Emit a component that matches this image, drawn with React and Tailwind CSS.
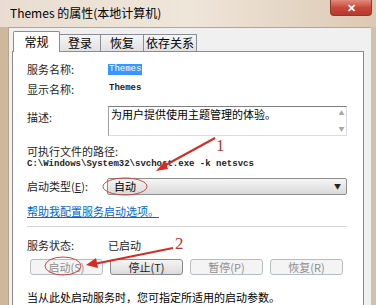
import React from 'react';

const cjk = { fontFamily: '"Noto Sans CJK SC", "Noto Sans", sans-serif' };
const mono = { fontFamily: '"Liberation Mono", "Noto Sans CJK SC", monospace' };

function Tab({ label, active, width }) {
    if (active) {
        return (
            <div className={'relative z-10 -mb-px flex h-[21px] items-center justify-center rounded-t-[2px] border border-b-0 border-[#898c95] bg-white text-[12px] text-black ' + width}>
                {label}
            </div>
        );
    }
    return (
        <div className={'-ml-px flex h-[17px] items-center justify-center border border-b-0 border-[#898c95] bg-gradient-to-b from-[#f6f6f6] to-[#e1e1e1] text-[12px] text-black ' + width}>
            {label}
        </div>
    );
}

function WinButton({ label, disabled }) {
    return (
        <div
            className={
                'flex h-[16px] w-[73px] items-center justify-center rounded-[3px] border text-[11px] ' +
                (disabled
                    ? 'border-[#b8bcbf] bg-[#f4f4f4] text-[#8d8d8d]'
                    : 'border-[#8a8a8a] bg-gradient-to-b from-[#f4f4f4] to-[#dcdcdc] text-[#222]')
            }
        >
            {label}
        </div>
    );
}

export default function App() {
    return (
        <div className="relative h-[305px] w-[376px] overflow-hidden bg-gradient-to-r from-[#cdb79c] via-[#e6d8c6] to-[#d6c1a8]" style={cjk}>
            {/* title bar */}
            <div className="flex h-[27px] items-start bg-gradient-to-r from-[#e8ddd0] via-[#efe6da] to-[#dcc9b3]">
                <div className="pl-[10px] pt-[5px] text-[12px] leading-[16px] text-black">Themes 的属性(本地计算机)</div>
                <div className="ml-auto mr-[4px] flex h-[16px] w-[42px] items-center justify-center rounded-b-[4px] border border-t-0 border-[#8a3a30] bg-gradient-to-b from-[#e08a7c] via-[#c8483a] to-[#b83a2c] text-[11px] font-bold leading-none text-white">
                    ✕
                </div>
            </div>

            {/* window body */}
            <div className="ml-[8px] mr-[5px] flex h-[278px] flex-col border-l border-t border-[#b5a48e] bg-[#f0f0f0]">
                <div className="flex items-end pl-[4px] pt-[3px]">
                    <Tab label="常规" active width="w-[47px]" />
                    <Tab label="登录" width="w-[42px]" />
                    <Tab label="恢复" width="w-[44px]" />
                    <Tab label="依存关系" width="w-[54px]" />
                </div>

                <div className="ml-[3px] mr-[7px] flex flex-1 flex-col border border-b-0 border-[#898c95] bg-white pl-[14px] pr-[16px] text-[11px] text-[#1e1e1e]">
                    <div className="mt-[10px] flex h-[14px] items-center">
                        <div className="w-[81px]">服务名称:</div>
                        <span className="bg-[#3399ff] px-px text-[9px] leading-[11px] text-white" style={mono}>Themes</span>
                    </div>
                    <div className="mt-[6px] flex h-[14px] items-center">
                        <div className="w-[81px]">显示名称:</div>
                        <span className="px-px text-[9px] font-bold" style={mono}>Themes</span>
                    </div>
                    <div className="mt-[10px] flex">
                        <div className="w-[81px] pt-[3px]">描述:</div>
                        <div className="flex h-[30px] flex-1 border border-t-[#7f7f7f] border-l-[#a0a0a0] border-r-[#dcdcdc] border-b-[#dcdcdc]">
                            <div className="flex-1 pl-[2px] leading-[14px] text-black">为用户提供使用主题管理的体验。</div>
                            <div className="flex w-[9px] flex-col items-center justify-between py-[3px] text-[6px] leading-none text-[#a8a8a8]">
                                <span>▲</span>
                                <span>▼</span>
                            </div>
                        </div>
                    </div>
                    <div className="mt-[8px] h-[14px] leading-[14px]">可执行文件的路径:</div>
                    <div className="h-[12px] text-[9px] font-bold leading-[12px] text-[#222]" style={mono}>
                        C:\Windows\System32\svchost.exe -k netsvcs
                    </div>
                    <div className="mt-[8px] flex h-[17px] items-center">
                        <div className="w-[80px]">启动类型(<span className="underline">E</span>):</div>
                        <div className="flex h-[17px] flex-1 items-center rounded-[2px] border border-[#8f8f8f] bg-gradient-to-b from-[#f5f5f5] to-[#dadada] pl-[6px] pr-[5px]">
                            <span className="text-black">自动</span>
                            <span className="ml-auto text-[7px] text-[#222]">▼</span>
                        </div>
                    </div>
                    <div className="mt-[9px] h-[14px] leading-[14px] text-[#0066cc] underline">帮助我配置服务启动选项。</div>
                    <div className="mt-[8px] h-px bg-[#d5d5d5]" />
                    <div className="mt-[11px] flex h-[14px] items-center">
                        <div className="w-[81px]">服务状态:</div>
                        <div>已启动</div>
                    </div>
                    <div className="mt-[7px] flex gap-[7px] pl-[3px]">
                        <WinButton label="启动(S)" disabled />
                        <WinButton label="停止(T)" />
                        <WinButton label="暂停(P)" disabled />
                        <WinButton label="恢复(R)" disabled />
                    </div>
                    <div className="mt-[15px] h-[14px] leading-[14px] text-black">当从此处启动服务时，您可指定所适用的启动参数。</div>
                </div>
            </div>

            {/* red annotations */}
            <svg className="pointer-events-none absolute inset-0" width="376" height="305" viewBox="0 0 376 305">
                <ellipse cx="125" cy="186.5" rx="22" ry="8.5" fill="none" stroke="#c9463d" strokeWidth="1" />
                <line x1="215" y1="138" x2="162" y2="167" stroke="#d42b22" strokeWidth="2" />
                <polygon points="156,171 165,161 168,169" fill="#d42b22" />
                <text x="216" y="151" fontSize="17" fill="#b33a30" fontFamily="Liberation Serif, serif">1</text>
                <ellipse cx="63" cy="266" rx="18" ry="9" fill="none" stroke="#c9463d" strokeWidth="1" />
                <line x1="173" y1="248" x2="94" y2="264" stroke="#d42b22" strokeWidth="2" />
                <polygon points="86,265 96,258 98,268" fill="#d42b22" />
                <text x="175" y="249" fontSize="17" fill="#b33a30" fontFamily="Liberation Serif, serif">2</text>
            </svg>
        </div>
    );
}
